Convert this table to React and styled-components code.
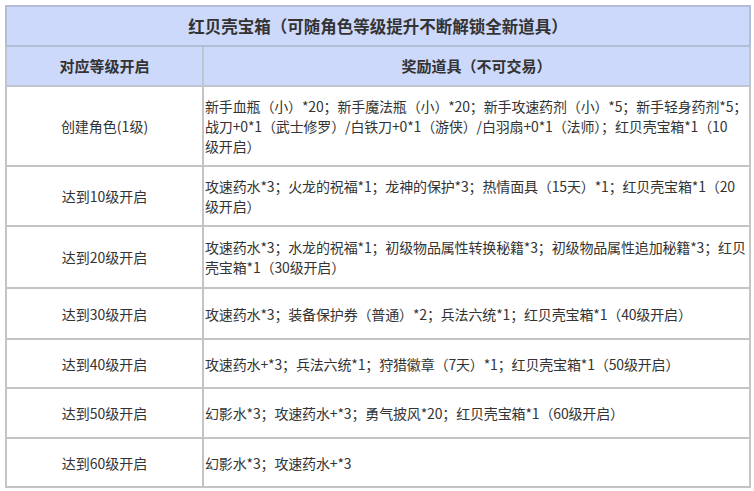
import React from "react";
import styled, { createGlobalStyle } from "styled-components";

const Global = createGlobalStyle`
  html, body { margin: 0; padding: 0; background: #ffffff; }
  body { font-family: "Noto Sans CJK SC", "Noto Sans", sans-serif; color: #333333; }
`;

const Page = styled.div`
  padding: 5px 3px 4px 5px;
`;

const Table = styled.table`
  width: 746px;
  border-collapse: collapse;
  table-layout: fixed;
  border: 2px solid #c4c4c4;
  font-size: 14px;
  line-height: 20px;
`;

const HeadCell = styled.th`
  background: #cdd9fb;
  border: 2px solid ${(p) => (p.$title ? "#b4bdd6" : "#c0c4d0")};
  height: 38px;
  font-size: ${(p) => (p.$title ? "16.5px" : "15px")};
  font-weight: 700;
  color: #333333;
  text-align: center;
  padding: 0;
`;

const LevelCell = styled.td`
  border: 2px solid #c4c4c4;
  text-align: center;
  vertical-align: middle;
  padding: 9px 4px;
  height: ${(p) => p.$h}px;
  box-sizing: border-box;
`;

const ItemCell = styled.td`
  border: 2px solid #c4c4c4;
  text-align: left;
  vertical-align: middle;
  padding: 9px 0 9px 1px;
  height: ${(p) => p.$h}px;
  box-sizing: border-box;
  letter-spacing: -0.15px;
`;

const Line = styled.span`
  display: block;
  white-space: nowrap;
`;

const rows = [
  {
    level: "创建角色(1级)",
    items: [
      "新手血瓶（小）*20；新手魔法瓶（小）*20；新手攻速药剂（小）*5；新手轻身药剂*5；",
      "战刀+0*1（武士修罗）/白铁刀+0*1（游侠）/白羽扇+0*1（法师）；红贝壳宝箱*1（10",
      "级开启）",
    ],
    h: 80,
  },
  {
    level: "达到10级开启",
    items: ["攻速药水*3；火龙的祝福*1；龙神的保护*3；热情面具（15天）*1；红贝壳宝箱*1（20", "级开启）"],
    h: 60,
  },
  {
    level: "达到20级开启",
    items: ["攻速药水*3；水龙的祝福*1；初级物品属性转换秘籍*3；初级物品属性追加秘籍*3；红贝", "壳宝箱*1（30级开启）"],
    h: 62,
  },
  {
    level: "达到30级开启",
    items: ["攻速药水*3；装备保护券（普通）*2；兵法六统*1；红贝壳宝箱*1（40级开启）"],
    h: 51,
  },
  {
    level: "达到40级开启",
    items: ["攻速药水+*3；兵法六统*1；狩猎徽章（7天）*1；红贝壳宝箱*1（50级开启）"],
    h: 49,
  },
  {
    level: "达到50级开启",
    items: ["幻影水*3；攻速药水+*3；勇气披风*20；红贝壳宝箱*1（60级开启）"],
    h: 50,
  },
  {
    level: "达到60级开启",
    items: ["幻影水*3；攻速药水+*3"],
    h: 49,
  },
];

export default function App() {
  return (
    <>
      <Global />
      <Page>
        <Table>
          <colgroup>
            <col style={{ width: "197px" }} />
            <col />
          </colgroup>
          <thead>
            <tr>
              <HeadCell $title colSpan={2}>
                红贝壳宝箱（可随角色等级提升不断解锁全新道具）
              </HeadCell>
            </tr>
            <tr>
              <HeadCell>对应等级开启</HeadCell>
              <HeadCell>奖励道具（不可交易）</HeadCell>
            </tr>
          </thead>
          <tbody>
            {rows.map((r) => (
              <tr key={r.level}>
                <LevelCell $h={r.h}>{r.level}</LevelCell>
                <ItemCell $h={r.h}>
                  {r.items.map((t, i) => (
                    <Line key={i}>{t}</Line>
                  ))}
                </ItemCell>
              </tr>
            ))}
          </tbody>
        </Table>
      </Page>
    </>
  );
}
